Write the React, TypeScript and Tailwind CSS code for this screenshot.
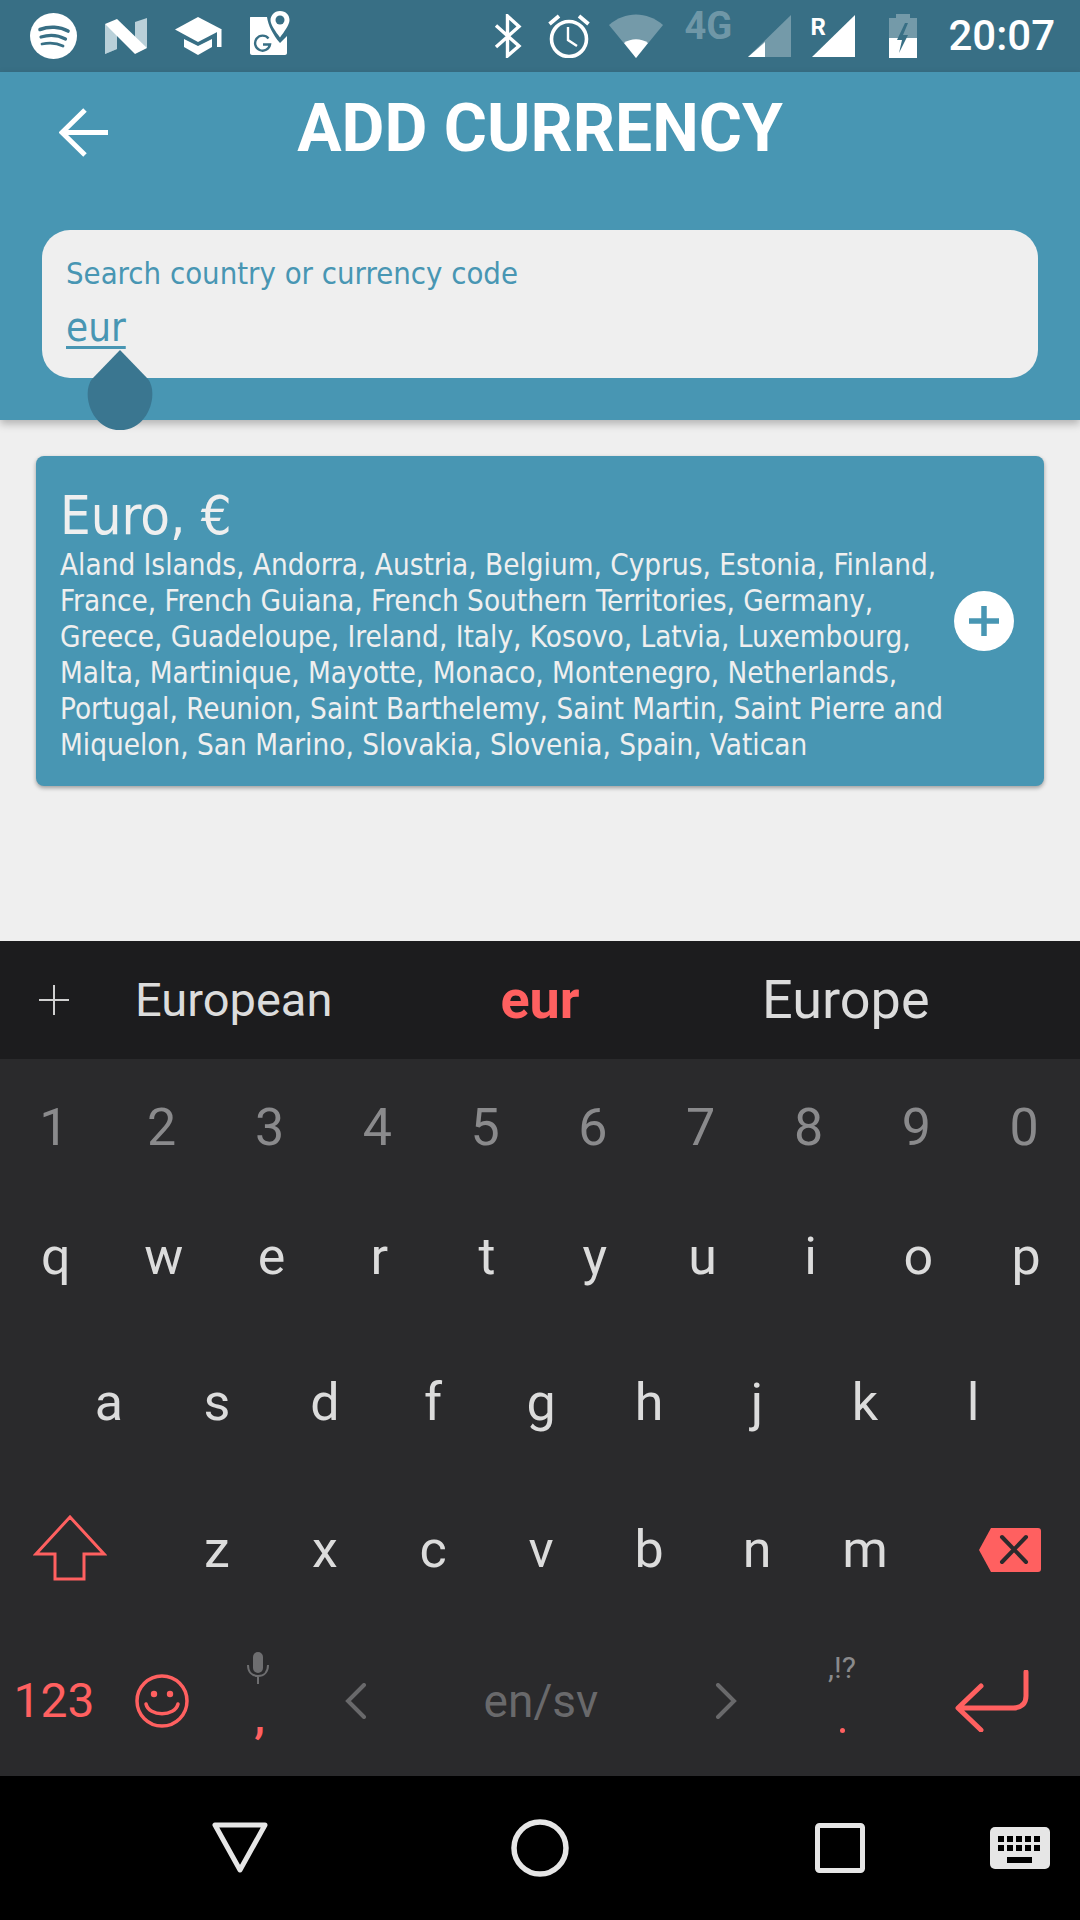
import React from "react";

const Digits = ["1","2","3","4","5","6","7","8","9","0"];
const Row1 = ["q","w","e","r","t","y","u","i","o","p"];
const Row2 = ["a","s","d","f","g","h","j","k","l"];
const Row3 = ["z","x","c","v","b","n","m"];
const RED = "#ff6060";

function Spotify() {
  return (
    <svg width="47" height="46" viewBox="0 0 47 46" className="shrink-0">
      <ellipse cx="23.5" cy="23" rx="23.5" ry="23" fill="#fff" />
      <g fill="none" stroke="#386f85" strokeLinecap="round">
        <path d="M10 16.5C19 13 30 13.5 38 18" strokeWidth="3.6" />
        <path d="M11 24C19 21.5 28 22 35.5 26" strokeWidth="3.2" />
        <path d="M12 31C19 29.5 27 30 33 33" strokeWidth="2.8" />
      </g>
    </svg>
  );
}
function NLogo() {
  return (
    <svg width="42" height="36" viewBox="0 0 42 36" className="shrink-0">
      <path d="M0 6V36L12 31V12Z" fill="#b9d0d9" />
      <path d="M30 4L42 0V30L30 24Z" fill="#b9d0d9" />
      <path d="M0 6L12 1L42 30L30 36Z" fill="#fff" />
      <path d="M0 6L12 20V31L0 36Z" fill="#b9d0d9" opacity="0.6" />
    </svg>
  );
}
function Cap() {
  return (
    <svg width="47" height="38" viewBox="0 0 47 38" className="shrink-0">
      <path d="M23 0L47 12.5L23 25L0 12.5Z" fill="#fff" />
      <path d="M9 22L23 29L37 22V30L23 38L9 30Z" fill="#fff" />
      <rect x="42" y="13" width="4.5" height="17" fill="#fff" />
    </svg>
  );
}
function Maps() {
  return (
    <svg width="40" height="44" viewBox="0 0 40 44" className="shrink-0 self-start mt-[11px]">
      <path d="M1 6H17C18 14 23 24 30 32L37 25V42C37 43 36 44 35 44H2C1 44 0 43 0 42V7C0 6 0 6 1 6Z" fill="#fff" />
      <path d="M30 0C24 0 20.5 5 20.5 9C20.5 14 26 21 30 26.5C34 21 39.5 14 39.5 9C39.5 4 36 0 30 0Z" fill="#fff" />
      <circle cx="30" cy="9" r="4.5" fill="#386f85" />
      <path d="M18.5 27.5A7.5 7.5 0 1 0 20 33.5H13" fill="none" stroke="#386f85" strokeWidth="2.4" />
    </svg>
  );
}
function Bluetooth() {
  return (
    <svg width="28" height="44" viewBox="0 0 28 44" className="shrink-0">
      <path d="M2 11.5L25 32L13.5 42V2L25 12.5L2 33" fill="none" stroke="#fff" strokeWidth="3.4" />
    </svg>
  );
}
function Alarm() {
  return (
    <svg width="42" height="44" viewBox="0 0 42 44" className="shrink-0">
      <circle cx="21" cy="25" r="17.5" fill="none" stroke="#fff" strokeWidth="3.6" />
      <path d="M20 13V26L29 32" fill="none" stroke="#fff" strokeWidth="2.4" />
      <path d="M1.5 10L11 2M40.5 10L31 2" fill="none" stroke="#fff" strokeWidth="3.8" />
    </svg>
  );
}
function Wifi() {
  return (
    <svg width="54" height="44" viewBox="0 0 54 44" className="shrink-0">
      <path d="M0 11C16 -3 38 -3 54 11L27 44Z" fill="#fff" opacity="0.3" />
      <path d="M15 29C22 24 32 24 39 29L27 44Z" fill="#fff" />
    </svg>
  );
}
function Signal({ full }: { full?: boolean }) {
  return (
    <svg width="43" height="42" viewBox="0 0 43 42" className="shrink-0">
      <path d="M43 0V42H0Z" fill="#fff" opacity={full ? 1 : 0.3} />
      {!full && <path d="M17 27V42H0Z" fill="#fff" />}
    </svg>
  );
}
function Battery() {
  return (
    <svg width="28" height="44" viewBox="0 0 28 44" className="shrink-0">
      <path d="M7 0H21V4H28V44H0V4H7Z" fill="#fff" opacity="0.3" />
      <path d="M0 24H28V44H0Z" fill="#fff" />
      <path d="M16 9L8 26H13L10 39L19 21H14L19 9Z" fill="#386f85" />
    </svg>
  );
}
function Shift() {
  return (
    <svg width="74" height="66" viewBox="0 0 74 66" className="mb-[4px]">
      <path d="M37 2L71 39H51V64H22V39H3Z" fill="none" stroke={RED} strokeWidth="3" />
    </svg>
  );
}
function Backspace() {
  return (
    <svg width="62" height="44" viewBox="0 0 62 44">
      <path d="M12 0H59C61 0 62 1 62 3V41C62 43 61 44 59 44H12L0 22Z" fill={RED} />
      <path d="M23 9L47 34M47 9L23 34" stroke="#2a2a2c" strokeWidth="4" strokeLinecap="round" />
    </svg>
  );
}
function Smile() {
  return (
    <svg width="54" height="54" viewBox="0 0 54 54">
      <circle cx="27" cy="27" r="25" fill="none" stroke={RED} strokeWidth="3.5" />
      <circle cx="19" cy="20" r="3.2" fill={RED} />
      <circle cx="35" cy="20" r="3.2" fill={RED} />
      <path d="M11 30C14 43 40 43 43 30" fill="none" stroke={RED} strokeWidth="3.5" strokeLinecap="round" />
    </svg>
  );
}
function Mic() {
  return (
    <svg width="22" height="32" viewBox="0 0 22 32">
      <rect x="6" y="0" width="10" height="21" rx="5" fill="#6e6e70" />
      <path d="M1 13C1 20 5 24 11 24C17 24 21 20 21 13M11 24V32" fill="none" stroke="#6e6e70" strokeWidth="2" />
    </svg>
  );
}
function Chevron({ flip }: { flip?: boolean }) {
  return (
    <svg width="22" height="36" viewBox="0 0 22 36" className={flip ? "rotate-180" : ""}>
      <path d="M19 2L3 18L19 34" fill="none" stroke="#69696b" strokeWidth="4" strokeLinecap="round" />
    </svg>
  );
}
function Enter() {
  return (
    <svg width="74" height="62" viewBox="0 0 74 62">
      <path d="M71 2V26C71 34 66 38 58 38H4M26 16L3 38L26 60" fill="none" stroke={RED} strokeWidth="5" strokeLinecap="round" strokeLinejoin="round" />
    </svg>
  );
}

export default function App() {
  return (
    <div className="w-[1080px] h-[1920px] flex flex-col bg-[#efefef] overflow-hidden font-['Roboto',sans-serif]">
      {/* status bar */}
      <div className="h-[72px] shrink-0 bg-[#386f85] flex items-center pl-[30px] text-white">
        <div className="flex items-center gap-[28px] h-full">
          <Spotify />
          <NLogo />
          <Cap />
          <Maps />
        </div>
        <div className="ml-auto flex items-center h-full pr-[25px]">
          <Bluetooth />
          <div className="ml-[26px]"><Alarm /></div>
          <div className="ml-[19px]"><Wifi /></div>
          <div className="ml-[21px] w-[64px] self-start mt-[6px] text-[38px] leading-[40px] font-bold text-white/30">4G</div>
          <Signal />
          <div className="ml-[21px] relative">
            <Signal full />
            <div className="absolute -left-[2px] -top-[2px] text-[24px] leading-[28px] font-bold">R</div>
          </div>
          <div className="ml-[34px]"><Battery /></div>
          <div className="ml-[31px] text-[42px] leading-[50px] font-medium">20:07</div>
        </div>
      </div>

      {/* header */}
      <div className="h-[348px] shrink-0 bg-[#4896b3] relative z-10 shadow-[0_4px_8px_rgba(0,0,0,0.25)] flex flex-col">
        <div className="h-[158px] shrink-0 grid grid-cols-[1fr_auto_1fr] items-start">
          <div className="pl-[59px] pt-[36px]">
            <svg width="50" height="50" viewBox="0 0 50 50">
              <path d="M49 24.5H4M26 2L3 24.5L26 47" fill="none" stroke="#fff" strokeWidth="5" />
            </svg>
          </div>
          <div className="mt-[14px] text-[66px] leading-[86px] font-bold text-white">ADD CURRENCY</div>
          <div />
        </div>
        <div className="mx-[42px] h-[148px] rounded-[28px] bg-[#efefef] px-[24px] pt-[22px] font-['DejaVu_Sans_Condensed','DejaVu_Sans',sans-serif] text-[#4896b3]">
          <div className="text-[30.8px] leading-[42px]">Search country or currency code</div>
          <div className="mt-[7px] text-[40px] leading-[52px] underline decoration-[3px] underline-offset-[5px]">eur</div>
        </div>
        <svg width="66" height="80" viewBox="0 0 66 80" className="absolute left-[87px] top-[278px]">
          <path d="M33 0L61 29C72 43 62 80 33 80C4 80 -6 43 5 29Z" fill="#3a7690" />
        </svg>
      </div>

      {/* content */}
      <div className="h-[521px] shrink-0 px-[36px] pt-[36px]">
        <div className="h-[330px] rounded-[8px] bg-[#4896b3] shadow-[0_2px_4px_rgba(0,0,0,0.35)] flex items-center pl-[24px] pr-[30px] text-[#efefef] font-['DejaVu_Sans_Condensed','DejaVu_Sans',sans-serif]">
          <div className="w-[894px] shrink-0 pt-[6px]">
            <div className="text-[54px] leading-[62px]">Euro, €</div>
            <div className="text-[29.4px] leading-[36px]">
              Aland Islands, Andorra, Austria, Belgium, Cyprus, Estonia, Finland, France, French Guiana, French Southern Territories, Germany, Greece, Guadeloupe, Ireland, Italy, Kosovo, Latvia, Luxembourg, Malta, Martinique, Mayotte, Monaco, Montenegro, Netherlands, Portugal, Reunion, Saint Barthelemy, Saint Martin, Saint Pierre and Miquelon, San Marino, Slovakia, Slovenia, Spain, Vatican
            </div>
          </div>
          <div className="w-[60px] h-[60px] rounded-full bg-white shrink-0 flex items-center justify-center">
            <svg width="30" height="30" viewBox="0 0 30 30">
              <path d="M15 0V30M0 15H30" stroke="#4896b3" strokeWidth="5.5" />
            </svg>
          </div>
        </div>
      </div>

      {/* suggestion strip */}
      <div className="h-[118px] shrink-0 bg-[#1c1c1e] flex items-center text-[#dcdcdc]">
        <div className="w-[135px] pl-[39px]">
          <svg width="30" height="30" viewBox="0 0 30 30" className="block">
            <path d="M15 0V30M0 15H30" stroke="#d0d0d0" strokeWidth="2" />
          </svg>
        </div>
        <div className="w-[325px] text-[47px] leading-[56px]">European</div>
        <div className="w-[160px] text-center text-[54px] leading-[60px] font-bold text-[#ff6060]">eur</div>
        <div className="pl-[142px] text-[54px] leading-[60px]">Europe</div>
      </div>

      {/* keyboard */}
      <div className="h-[717px] shrink-0 bg-[#2a2a2c] flex flex-col text-[52px] text-[#dcdcdc]">
        <div className="h-[138px] shrink-0 grid grid-cols-10 items-center text-center text-[#8a8a8c] pr-[2px]">
          {Digits.map((d) => <div key={d}>{d}</div>)}
        </div>
        <div className="h-[119px] shrink-0 grid grid-cols-10 items-center text-center pl-[2px]">
          {Row1.map((d) => <div key={d}>{d}</div>)}
        </div>
        <div className="h-[174px] shrink-0 flex items-center text-center pl-[55px]">
          {Row2.map((d) => <div key={d} className="w-[108px]">{d}</div>)}
        </div>
        <div className="h-[120px] shrink-0 flex items-center text-center">
          <div className="w-[163px] pl-[33px] flex items-center"><Shift /></div>
          {Row3.map((d) => <div key={d} className="w-[108px]">{d}</div>)}
          <div className="ml-[60px] flex items-center"><Backspace /></div>
        </div>
        <div className="flex-1 flex items-stretch">
          <div className="w-[108px] pt-[16px] flex items-center justify-center text-[48px] leading-[60px] text-[#ff6060]">123</div>
          <div className="w-[108px] pt-[16px] flex items-center justify-center"><Smile /></div>
          <div className="w-[84px] pt-[42px] flex flex-col items-center">
            <Mic />
            <div className="mt-[12px] ml-[3px] text-[48px] leading-[40px] font-medium text-[#ff6060]">,</div>
          </div>
          <div className="w-[112px] pt-[16px] flex items-center justify-center"><Chevron /></div>
          <div className="w-[258px] pt-[16px] flex items-center justify-center text-[46px] leading-[60px] text-[#69696b]">en/sv</div>
          <div className="w-[112px] pt-[16px] flex items-center justify-center"><Chevron flip /></div>
          <div className="w-[120px] pt-[38px] flex flex-col items-center">
            <div className="text-[30px] leading-[40px] text-[#8a8a8c]">,!?</div>
            <div className="mt-[40px] w-[5px] h-[5px] rounded-full bg-[#ff6060]" />
          </div>
          <div className="w-[178px] pl-[2px] pt-[16px] flex items-center justify-center"><Enter /></div>
        </div>
      </div>

      {/* nav bar */}
      <div className="h-[144px] shrink-0 bg-black flex items-center pl-[212px]">
        <svg width="56" height="52" viewBox="0 0 56 52">
          <path d="M3 3H53L28 48Z" fill="none" stroke="#e6e6e6" strokeWidth="5" strokeLinejoin="round" />
        </svg>
        <svg width="58" height="58" viewBox="0 0 58 58" className="ml-[243px]">
          <circle cx="29" cy="29" r="26" fill="none" stroke="#e6e6e6" strokeWidth="5.5" />
        </svg>
        <svg width="50" height="50" viewBox="0 0 50 50" className="ml-[246px]">
          <rect x="2.5" y="2.5" width="45" height="45" rx="2" fill="none" stroke="#e6e6e6" strokeWidth="5" />
        </svg>
        <svg width="60" height="42" viewBox="0 0 60 42" className="ml-[125px]">
          <rect width="60" height="42" rx="5" fill="#e6e6e6" />
          <g fill="#000">
            <rect x="8" y="9" width="6" height="6" /><rect x="17" y="9" width="6" height="6" /><rect x="26" y="9" width="6" height="6" /><rect x="35" y="9" width="6" height="6" /><rect x="44" y="9" width="6" height="6" />
            <rect x="8" y="18" width="6" height="6" /><rect x="17" y="18" width="6" height="6" /><rect x="26" y="18" width="6" height="6" /><rect x="35" y="18" width="6" height="6" /><rect x="44" y="18" width="6" height="6" />
            <rect x="17" y="30" width="25" height="6" />
          </g>
        </svg>
      </div>
    </div>
  );
}
